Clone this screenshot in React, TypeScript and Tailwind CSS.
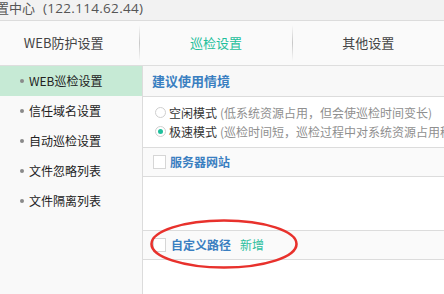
import React from "react";

const menu = ["WEB巡检设置", "信任域名设置", "自动巡检设置", "文件忽略列表", "文件隔离列表"];

function Radio({ checked }: { checked?: boolean }) {
  return (
    <span className="w-[11px] h-[11px] rounded-full border border-[#cfcfcf] bg-white flex items-center justify-center shrink-0">
      {checked && <span className="w-[5px] h-[5px] rounded-full bg-[#1fbf9c]" />}
    </span>
  );
}

function Checkbox() {
  return <span className="w-[13px] h-[14px] border border-[#d6d6d6] bg-white shrink-0" />;
}

export default function App() {
  return (
    <div className="w-[444px] h-[294px] overflow-hidden bg-white relative font-['Noto_Sans_CJK_SC',sans-serif]">
      {/* title bar */}
      <div className="h-[21px] bg-[#f2f2f2] border-b border-[#dcdcdc] overflow-hidden">
        <span className="block ml-[-4px] text-[13px] leading-[15px] text-[#555] whitespace-nowrap">
          置中心
          <span className="ml-[8px] font-['Open_Sans',sans-serif] text-[13.5px] tracking-[0.3px]">(122.114.62.44)</span>
        </span>
      </div>

      {/* tabs */}
      <div className="h-[45px] bg-[#fafafa] border-b border-[#dedede] flex ml-[-12px]">
        <div className="w-[154px] flex items-center justify-center text-[13px] text-[#444]">WEB防护设置</div>
        <div className="w-px my-[4px] bg-gradient-to-b from-transparent via-[#c8c8c8] to-transparent" />
        <div className="w-[154px] flex items-center justify-center text-[13px] text-[#1fbf9c]">巡检设置</div>
        <div className="w-px my-[4px] bg-gradient-to-b from-transparent via-[#c8c8c8] to-transparent" />
        <div className="w-[154px] flex items-center justify-center text-[13px] text-[#444]">其他设置</div>
      </div>

      <div className="flex h-[228px]">
        {/* sidebar */}
        <div className="w-[143px] bg-[#f9f9f9] border-r border-[#dcdcdc] shrink-0">
          {menu.map((m, i) => (
            <div
              key={m}
              className={`h-[30px] flex items-center pl-[20px] gap-[5px] text-[12px] text-[#222] ${i === 0 ? "bg-[#c6ead5]" : ""}`}
            >
              <span className="w-[4px] h-[4px] rounded-full bg-[#8a8a8a]" />
              {m}
            </div>
          ))}
        </div>

        {/* main */}
        <div className="flex-1 flex flex-col">
          <div className="h-[31px] bg-[#f8f8f8] border-b border-[#dcdcdc] flex items-center pl-[9px] text-[13px] font-semibold text-[#3a7fc1]">
            建议使用情境
          </div>
          <div className="h-[51px] border-b border-[#dcdcdc] pt-[6px] pl-[12px] text-[12px] whitespace-nowrap">
            <div className="h-[19px] flex items-center gap-[3px]">
              <Radio />
              <span className="text-[#333]">空闲模式</span>
              <span className="text-[#8f8f8f]">(低系统资源占用，但会使巡检时间变长)</span>
            </div>
            <div className="h-[19px] flex items-center gap-[3px]">
              <Radio checked />
              <span className="text-[#333]">极速模式</span>
              <span className="text-[#8f8f8f]">(巡检时间短，巡检过程中对系统资源占用稍高)</span>
            </div>
          </div>
          <div className="h-[29px] bg-[#fafafa] border-b border-[#dcdcdc] flex items-center pl-[10px] gap-[4px] text-[12px]">
            <Checkbox />
            <span className="font-semibold text-[#3a7fc1]">服务器网站</span>
          </div>
          <div className="h-[54px] border-b border-[#dcdcdc]" />
          <div className="h-[29px] bg-[#fafafa] border-b border-[#dcdcdc] flex items-center pl-[10px] text-[12px] relative">
            <Checkbox />
            <span className="ml-[5px] font-semibold text-[#3a7fc1]">自定义路径</span>
            <span className="ml-[9px] text-[#2dbf9f]">新增</span>
            <svg className="absolute left-[6px] top-[-13px]" width="150" height="52" viewBox="0 0 150 52">
              <ellipse cx="75" cy="26" rx="72.5" ry="23.5" fill="none" stroke="#e8312c" strokeWidth="2.6" />
            </svg>
          </div>
          <div className="flex-1" />
        </div>
      </div>
    </div>
  );
}
